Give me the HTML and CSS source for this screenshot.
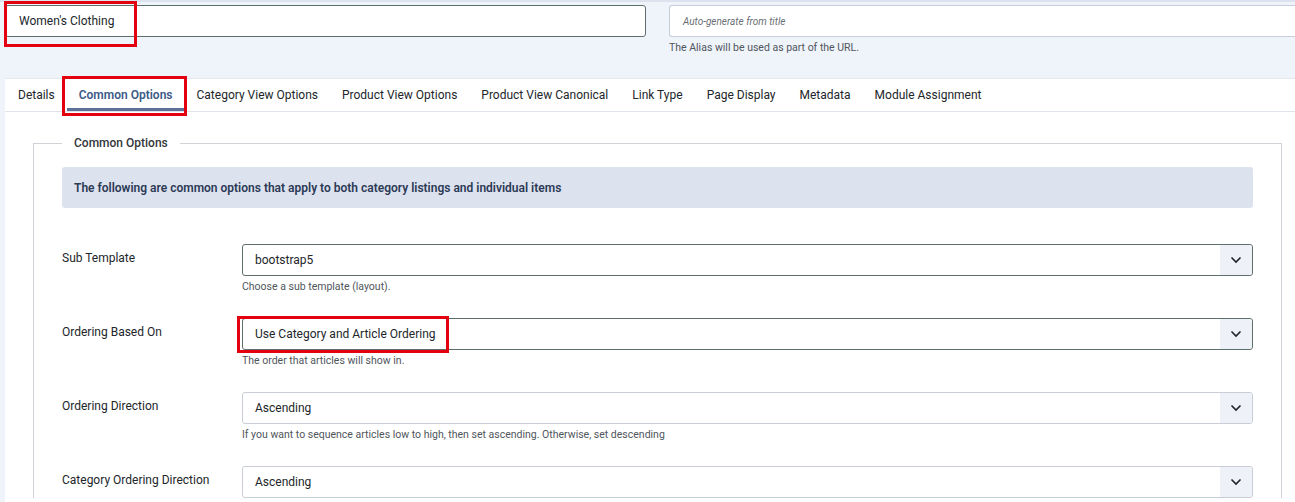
FILE: index.html
```html
<!DOCTYPE html>
<html>
<head>
<meta charset="utf-8">
<link rel="stylesheet" href="styles.css">
</head>
<body>
<div class="page">
  <div class="top">
    <div class="title-field">
      <div class="input dark">Women's Clothing</div>
      <span class="mark mark-title"></span>
    </div>
    <div class="alias-field">
      <div class="input light placeholder">Auto-generate from title</div>
      <div class="help">The Alias will be used as part of the URL.</div>
    </div>
  </div>

  <div class="main">
    <div class="tabs">
      <div class="tab">Details</div>
      <div class="tab active">Common Options<span class="mark mark-tab"></span></div>
      <div class="tab">Category View Options</div>
      <div class="tab">Product View Options</div>
      <div class="tab">Product View Canonical</div>
      <div class="tab">Link Type</div>
      <div class="tab">Page Display</div>
      <div class="tab">Metadata</div>
      <div class="tab">Module Assignment</div>
    </div>

    <fieldset class="options">
      <legend>Common Options</legend>
      <div class="alert">The following are common options that apply to both category listings and individual items</div>

      <div class="row">
        <div class="label">Sub Template</div>
        <div class="control">
          <div class="select dark"><span class="value">bootstrap5</span><span class="chev"><svg width="12" height="8" viewBox="0 0 12 8"><path d="M1.5 1.5 6 6l4.5-4.5" fill="none" stroke="#1f2328" stroke-width="1.6"/></svg></span></div>
          <div class="help">Choose a sub template (layout).</div>
        </div>
      </div>

      <div class="row">
        <div class="label">Ordering Based On</div>
        <div class="control">
          <div class="select dark"><span class="value">Use Category and Article Ordering</span><span class="chev"><svg width="12" height="8" viewBox="0 0 12 8"><path d="M1.5 1.5 6 6l4.5-4.5" fill="none" stroke="#1f2328" stroke-width="1.6"/></svg></span><span class="mark mark-order"></span></div>
          <div class="help">The order that articles will show in.</div>
        </div>
      </div>

      <div class="row">
        <div class="label">Ordering Direction</div>
        <div class="control">
          <div class="select light"><span class="value">Ascending</span><span class="chev"><svg width="12" height="8" viewBox="0 0 12 8"><path d="M1.5 1.5 6 6l4.5-4.5" fill="none" stroke="#1f2328" stroke-width="1.6"/></svg></span></div>
          <div class="help">If you want to sequence articles low to high, then set ascending. Otherwise, set descending</div>
        </div>
      </div>

      <div class="row">
        <div class="label">Category Ordering Direction</div>
        <div class="control">
          <div class="select light"><span class="value">Ascending</span><span class="chev"><svg width="12" height="8" viewBox="0 0 12 8"><path d="M1.5 1.5 6 6l4.5-4.5" fill="none" stroke="#1f2328" stroke-width="1.6"/></svg></span></div>
        </div>
      </div>
    </fieldset>
  </div>
</div>
</body>
</html>
```

FILE: styles.css
```css
* { box-sizing: border-box; }
html, body { margin: 0; padding: 0; }
body {
  font-family: Roboto, "Liberation Sans", sans-serif;
  font-size: 12px;
  color: #22262a;
  background: #eff3fa;
  overflow: hidden;
  height: 502px;
}
.page {
  border-top: 2px solid #dde3ee;
}
.top {
  display: flex;
  padding: 3px 0 0 5px;
  height: 76px;
}
.title-field {
  position: relative;
  width: 641px;
}
.alias-field {
  margin-left: 23px;
  flex: 1;
}
.input {
  height: 32px;
  background: #fff;
  border-radius: 3px;
  display: flex;
  align-items: center;
  padding-left: 13px;
  font-size: 12px;
}
.input.dark { border: 1px solid #5d6e6b; }
.input.light { border: 1px solid #c6cddb; border-right: none; border-radius: 3px 0 0 3px; }
.placeholder {
  font-style: italic;
  font-size: 10px;
  color: #6a6f75;
}
.help {
  font-size: 10.5px;
  line-height: 12px;
  color: #50565c;
  margin-top: 5px;
}
.mark {
  position: absolute;
  border: 3px solid #e3000f;
  pointer-events: none;
}
.mark-title { left: -1px; top: -4px; width: 133px; height: 46px; }

.main {
  background: #fff;
  margin-left: 5px;
  border-top: 1px solid #e3e8f0;
  height: 430px;
}
.tabs {
  display: flex;
  padding-left: 1px;
  height: 33px;
  border-bottom: 1px solid #dfe3ea;
}
.tab {
  position: relative;
  padding: 0 12px;
  line-height: 32px;
  font-size: 12px;
  color: #22262a;
  white-space: nowrap;
}
.tab.active {
  color: #3d5a87;
  font-weight: 600;
  box-shadow: inset 0 -3px 0 #5e7196;
}
.mark-tab { left: -5px; top: -3px; right: -2px; bottom: -5px; }

.options {
  margin: 24px 13px 0 28px;
  border: 1px solid #cfd2d6;
  border-bottom: none;
  padding: 17px 28px 0 28px;
  min-width: 0;
}
.options legend {
  padding: 0 12px;
  font-weight: 500;
  font-size: 12px;
  color: #33373b;
}
.alert {
  background: #dde2ef;
  border-radius: 3px;
  height: 41px;
  display: flex;
  align-items: center;
  padding-left: 12px;
  font-weight: 600;
  font-size: 12px;
  color: #2b3a55;
}
.row {
  display: flex;
  margin-top: 36px;
}
.row + .row { margin-top: 25px; }
.label {
  width: 180px;
  padding-top: 7px;
  color: #22262a;
}
.control { flex: 1; }
.select {
  position: relative;
  height: 32px;
  border-radius: 3px;
  display: flex;
  align-items: center;
  justify-content: space-between;
  background: #fff;
}
.select.dark { border: 1px solid #5d6e6b; }
.select.light { border: 1px solid #c9ced6; }
.select .value { padding-left: 12px; }
.chev {
  width: 32px;
  align-self: stretch;
  background: #eef2f8;
  display: flex;
  align-items: center;
  justify-content: center;
  border-radius: 0 3px 3px 0;
}
.mark-order { left: -6px; top: -3px; width: 212px; height: 37px; }
```
